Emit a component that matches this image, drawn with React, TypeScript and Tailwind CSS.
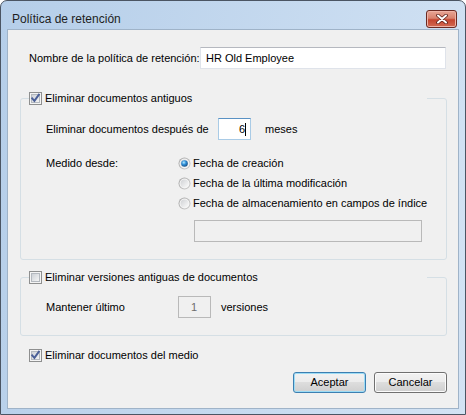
import { useId } from 'react'

function CheckBox({ checked }: { checked: boolean }) {
  const id = useId()
  return (
    <svg width="13" height="13" viewBox="0 0 13 13" className="shrink-0">
      <defs>
        <linearGradient id={id} x1="0" y1="0" x2="1" y2="1">
          <stop offset="0" stopColor="#cbcfd5" />
          <stop offset="1" stopColor="#f7f7f7" />
        </linearGradient>
      </defs>
      <rect x="0.5" y="0.5" width="12" height="12" fill="#f4f4f4" stroke="#8e8f8f" />
      <rect x="2.5" y="2.5" width="8" height="8" fill={`url(#${id})`} stroke="#b4b9bf" />
      {checked && (
        <path d="M3.2 6.4 L5.4 8.9 L9.9 2.6" fill="none" stroke="#4a5f97" strokeWidth="1.9" strokeLinecap="square" />
      )}
    </svg>
  )
}

function Radio({ checked }: { checked: boolean }) {
  const id = useId()
  return (
    <svg width="13" height="13" viewBox="0 0 13 13" className="shrink-0">
      <defs>
        <linearGradient id={`${id}o`} x1="0" y1="0" x2="1" y2="1">
          <stop offset="0" stopColor="#a2a2a2" />
          <stop offset="1" stopColor="#d0d0d0" />
        </linearGradient>
        <linearGradient id={`${id}i`} x1="0" y1="0" x2="1" y2="1">
          <stop offset="0" stopColor="#cfd1d4" />
          <stop offset="1" stopColor="#fbfbfb" />
        </linearGradient>
        <radialGradient id={`${id}d`} cx="0.4" cy="0.35" r="0.7">
          <stop offset="0" stopColor="#b9ecff" />
          <stop offset="0.45" stopColor="#2f8fd8" />
          <stop offset="1" stopColor="#174a7c" />
        </radialGradient>
      </defs>
      <circle cx="6.5" cy="6.5" r="6" fill={`url(#${id}o)`} />
      <circle cx="6.5" cy="6.5" r="5" fill="#f6f6f6" />
      <circle cx="6.5" cy="6.5" r="4" fill={`url(#${id}i)`} />
      {checked && <circle cx="6.5" cy="6.5" r="3.3" fill={`url(#${id}d)`} />}
    </svg>
  )
}

type BoxVariant = 'normal' | 'focused' | 'disabled'

function TextBox({ children, variant, className }: { children?: React.ReactNode; variant: BoxVariant; className: string }) {
  const skin =
    variant === 'focused'
      ? 'border-[#a9cbe6] border-t-[#5a92c4] bg-white'
      : variant === 'disabled'
        ? 'border-[#b9b9b9] bg-[#f0f0f0] text-[#6d6d6d]'
        : 'border-[#dfe3ea] border-t-[#b5b8bf] bg-white'
  return <div className={`h-[22px] border flex items-center ${skin} ${className}`}>{children}</div>
}

function WinButton({ children, isDefault }: { children: React.ReactNode; isDefault?: boolean }) {
  return (
    <button
      className={
        isDefault
          ? 'w-[73px] h-[21px] rounded-[3px] border border-[#3c7fb1] shadow-[inset_0_0_0_1px_#9ddcf5] bg-[linear-gradient(#f2f2f2_0%,#ebebeb_50%,#dddddd_50%,#cfcfcf_100%)]'
          : 'w-[73px] h-[21px] rounded-[3px] border border-[#707070] shadow-[inset_0_0_0_1px_#fbfbfb] bg-[linear-gradient(#f2f2f2_0%,#ebebeb_50%,#dddddd_50%,#cfcfcf_100%)]'
      }
    >
      {children}
    </button>
  )
}

function GroupLegend({ checked, label }: { checked: boolean; label: string }) {
  return (
    <legend className="w-[398px] h-[15px] flex items-center">
      <CheckBox checked={checked} />
      <span className="ml-[3px]">{label}</span>
    </legend>
  )
}

export default function App() {
  return (
    <div className="w-[466px] h-[415px] flex flex-col rounded-t-[7px] border border-[#4b5563] bg-[linear-gradient(100deg,#b5cee9,#d3e3f4)] px-[6px] pb-[5px] text-[11px] leading-[15px] text-black font-['Liberation_Sans',Arial,sans-serif]">
      {/* title bar */}
      <div className="h-[28px] flex items-start justify-between">
        <span className="mt-[11px] ml-[5px] text-[12px] text-[#1e1e1e]">Política de retención</span>
        <button className="mt-[9px] mr-[2px] w-[31px] h-[18px] rounded-[3px] border border-[#6b2a22] shadow-[inset_0_0_0_1px_#eeb3a6] bg-[linear-gradient(#e8a696_0%,#d8826e_45%,#c4452f_55%,#d26a52_100%)] flex items-center justify-center">
          <svg width="12" height="10" viewBox="0 0 12 10">
            <path d="M2 1.5 L10 8.5 M10 1.5 L2 8.5" stroke="#5a1f18" strokeWidth="3.6" strokeLinecap="round" />
            <path d="M2 1.5 L10 8.5 M10 1.5 L2 8.5" stroke="#ffffff" strokeWidth="2" strokeLinecap="round" />
          </svg>
        </button>
      </div>

      {/* client area */}
      <div className="flex-1 flex flex-col border border-[#9fb3c8] bg-[#f0f0f0] pl-[12px] pr-[11px] pt-[17px]">
        <div className="flex items-center pl-[9px] pr-[1px]">
          <span className="w-[171px] shrink-0">Nombre de la política de retención:</span>
          <TextBox variant="normal" className="flex-1 pl-[5px]">HR Old Employee</TextBox>
        </div>

        <fieldset className="mt-[22px] border border-[#d5dfe5] rounded-[3px] pl-[8px] pb-[17px]">
          <GroupLegend checked label="Eliminar documentos antiguos" />
          <div className="ml-[17px] mt-[12px] flex items-center">
            <span className="w-[172px] shrink-0">Eliminar documentos después de</span>
            <TextBox variant="focused" className="w-[33px] justify-end pr-[4px]">
              <span>6</span>
              <span className="w-px h-[13px] bg-black" />
            </TextBox>
            <span className="ml-[14px]">meses</span>
          </div>
          <div className="ml-[17px] mt-[13px] flex">
            <span className="w-[132px] h-[20px] shrink-0 flex items-center">Medido desde:</span>
            <div className="flex flex-col">
              <div className="h-[20px] flex items-center">
                <Radio checked />
                <span className="ml-[2px]">Fecha de creación</span>
              </div>
              <div className="h-[20px] flex items-center">
                <Radio checked={false} />
                <span className="ml-[2px]">Fecha de la última modificación</span>
              </div>
              <div className="h-[20px] flex items-center">
                <Radio checked={false} />
                <span className="ml-[2px]">Fecha de almacenamiento en campos de índice</span>
              </div>
              <TextBox variant="disabled" className="mt-[7px] ml-[16px] w-[228px]" />
            </div>
          </div>
        </fieldset>

        <fieldset className="mt-[10px] border border-[#d5dfe5] rounded-[3px] pl-[8px] pb-[17px]">
          <GroupLegend checked={false} label="Eliminar versiones antiguas de documentos" />
          <div className="ml-[17px] mt-[11px] flex items-center">
            <span className="w-[132px] shrink-0">Mantener último</span>
            <TextBox variant="disabled" className="w-[33px] justify-end pr-[13px]">1</TextBox>
            <span className="ml-[10px]">versiones</span>
          </div>
        </fieldset>

        <div className="mt-[12px] pl-[9px] h-[15px] flex items-center">
          <CheckBox checked />
          <span className="ml-[3px]">Eliminar documentos del medio</span>
        </div>

        <div className="mt-[9px] flex justify-end gap-[8px]">
          <WinButton isDefault>Aceptar</WinButton>
          <WinButton>Cancelar</WinButton>
        </div>
      </div>
    </div>
  )
}
